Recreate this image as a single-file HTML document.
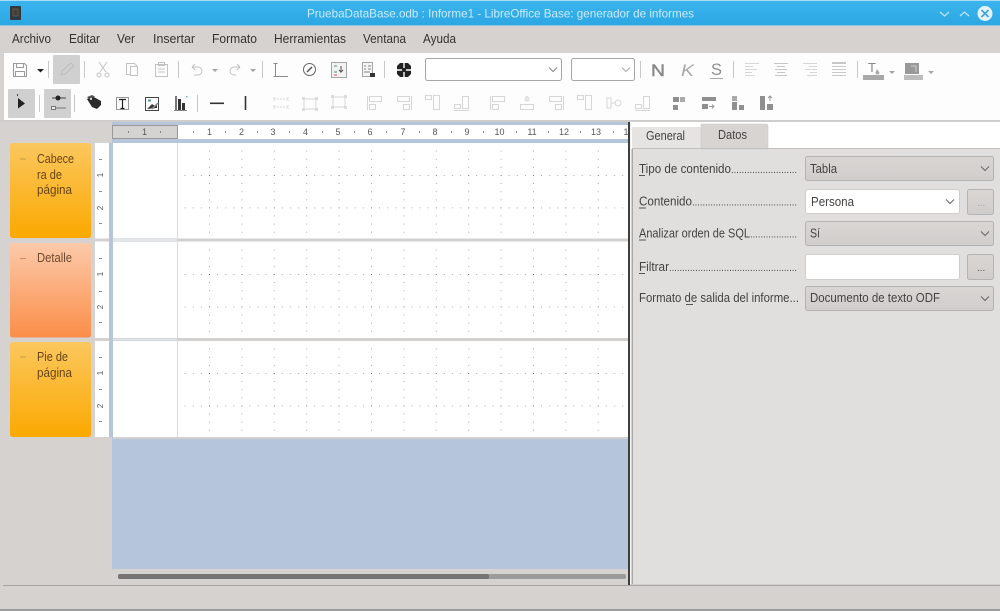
<!DOCTYPE html>
<html><head><meta charset="utf-8">
<style>
html,body{margin:0;padding:0;width:1000px;height:611px;overflow:hidden;background:#d6d2d0}
svg{display:block;filter:blur(.35px)}
text{font-family:"Liberation Sans",sans-serif;font-size:12.5px;fill:#3a3836}
.m{fill:#35332f}
.l{fill:#454341}
.r{font-size:9px;fill:#555;text-anchor:middle}
.b{fill:#66441a}
.ic{fill:none;stroke:#c2c2c2;stroke-width:1}
.li{fill:none;stroke:#d6d6d6;stroke-width:1}
.sep{stroke:#c8c8c8;stroke-width:1}
</style></head><body>
<svg width="1000" height="611" viewBox="0 0 1000 611" xmlns="http://www.w3.org/2000/svg">
<defs>
<linearGradient id="tb" x1="0" y1="0" x2="0" y2="1"><stop offset="0" stop-color="#3cb5ee"/><stop offset="1" stop-color="#2ba6e2"/></linearGradient>
<linearGradient id="y" x1="0" y1="0" x2="0" y2="1"><stop offset="0" stop-color="#fbc75e"/><stop offset="1" stop-color="#fba900"/></linearGradient>
<linearGradient id="o" x1="0" y1="0" x2="0" y2="1"><stop offset="0" stop-color="#fccaaa"/><stop offset="1" stop-color="#fb8e48"/></linearGradient>
<linearGradient id="c" x1="0" y1="0" x2="0" y2="1"><stop offset="0" stop-color="#d9d6d4"/><stop offset="1" stop-color="#d0cdcb"/></linearGradient>
<pattern id="g1" width="32.4" height="32.4" patternUnits="userSpaceOnUse" patternTransform="translate(176.6 142.6)">
<rect x="0" y="0" width="1" height="1" fill="#777"/>
<rect x="8" y="0" width="1" height="1" fill="#aaa"/><rect x="16.2" y="0" width="1" height="1" fill="#aaa"/><rect x="24.3" y="0" width="1" height="1" fill="#aaa"/>
<rect x="0" y="8" width="1" height="1" fill="#aaa"/><rect x="0" y="16.2" width="1" height="1" fill="#aaa"/><rect x="0" y="24.3" width="1" height="1" fill="#aaa"/>
</pattern>
<pattern id="g2" width="32.4" height="32.4" patternUnits="userSpaceOnUse" patternTransform="translate(176.6 241.6)">
<rect x="0" y="0" width="1" height="1" fill="#777"/>
<rect x="8" y="0" width="1" height="1" fill="#aaa"/><rect x="16.2" y="0" width="1" height="1" fill="#aaa"/><rect x="24.3" y="0" width="1" height="1" fill="#aaa"/>
<rect x="0" y="8" width="1" height="1" fill="#aaa"/><rect x="0" y="16.2" width="1" height="1" fill="#aaa"/><rect x="0" y="24.3" width="1" height="1" fill="#aaa"/>
</pattern>
<pattern id="g3" width="32.4" height="32.4" patternUnits="userSpaceOnUse" patternTransform="translate(176.6 340.6)">
<rect x="0" y="0" width="1" height="1" fill="#777"/>
<rect x="8" y="0" width="1" height="1" fill="#aaa"/><rect x="16.2" y="0" width="1" height="1" fill="#aaa"/><rect x="24.3" y="0" width="1" height="1" fill="#aaa"/>
<rect x="0" y="8" width="1" height="1" fill="#aaa"/><rect x="0" y="16.2" width="1" height="1" fill="#aaa"/><rect x="0" y="24.3" width="1" height="1" fill="#aaa"/>
</pattern>
<g id="a1" class="li"><rect x="-7.5" y="-7.5" width="6" height="4"/><rect x="0.5" y="-7.5" width="6" height="14"/></g>
<g id="a2" class="li"><rect x="-7.5" y="1.5" width="6" height="4"/><rect x="0.5" y="-6.5" width="6" height="12"/><path d="M-8 7.5H7"/></g>
<g id="a3" class="li"><path d="M-7.5-7V7"/><rect x="-5.5" y="-6.5" width="12" height="5"/><rect x="-5.5" y="1.5" width="6" height="5"/></g>
<g id="a4" class="li"><path d="M0-7V-2"/><circle cx="0" cy="-4" r="2"/><rect x="-6.5" y="1.5" width="13" height="5"/></g>
<g id="a5" class="li"><path d="M7.5-7V7"/><rect x="-6.5" y="-6.5" width="12" height="5"/><rect x="-.5" y="1.5" width="6" height="5"/></g>
<g id="a6" class="li"><rect x="-7" y="-5" width="4" height="10"/><path d="M-3 0H1"/><circle cx="4" cy="0" r="3"/></g>
<g id="d1" class="li"><path d="M-7-4H7M-7 4H7M-7-6V-2M7-6V-2M-7 2V6M7 2V6" stroke-dasharray="2 1"/></g>
<g id="d2" class="li"><rect x="-6" y="-5" width="12" height="10"/><rect x="-8" y="-7" width="3" height="3" fill="#dcdcdc" stroke="none"/><rect x="5" y="-7" width="3" height="3" fill="#dcdcdc" stroke="none"/><rect x="-8" y="4" width="3" height="3" fill="#dcdcdc" stroke="none"/><rect x="5" y="4" width="3" height="3" fill="#dcdcdc" stroke="none"/></g>
</defs>

<!-- base -->
<rect width="1000" height="611" fill="#d6d2d0"/>
<!-- title bar -->
<rect width="1000" height="26" fill="url(#tb)"/>
<rect width="1000" height="1" fill="#a9dcf5"/>
<rect x="0" y="25" width="1000" height="1" fill="#8fc6e0"/>
<rect x="10" y="6" width="11" height="14" rx="1" fill="#2f3a40"/>
<rect x="13" y="9" width="5" height="7" fill="#4a3a30" stroke="#7a6a5a" stroke-width=".6"/>
<text x="307" y="17.5" textLength="387" lengthAdjust="spacingAndGlyphs" style="fill:#c9ebfb;font-size:12px">PruebaDataBase.odb : Informe1 - LibreOffice Base: generador de informes</text>
<path d="M940 12l4.5 4 4.5-4" fill="none" stroke="#bfe6f9" stroke-width="1.2"/>
<path d="M960 16l4.5-4 4.5 4" fill="none" stroke="#bfe6f9" stroke-width="1.2"/>
<circle cx="985" cy="13.5" r="7.5" fill="#e4f4fc"/>
<path d="M981.5 10l7 7M988.5 10l-7 7" stroke="#3aa6dc" stroke-width="1.6"/>

<!-- menu -->
<g>
<text class="m" x="12" y="43" textLength="39" lengthAdjust="spacingAndGlyphs">Archivo</text>
<text class="m" x="69" y="43" textLength="31" lengthAdjust="spacingAndGlyphs">Editar</text>
<text class="m" x="117" y="43" textLength="18" lengthAdjust="spacingAndGlyphs">Ver</text>
<text class="m" x="153" y="43" textLength="42" lengthAdjust="spacingAndGlyphs">Insertar</text>
<text class="m" x="212" y="43" textLength="45" lengthAdjust="spacingAndGlyphs">Formato</text>
<text class="m" x="274" y="43" textLength="72" lengthAdjust="spacingAndGlyphs">Herramientas</text>
<text class="m" x="363" y="43" textLength="43" lengthAdjust="spacingAndGlyphs">Ventana</text>
<text class="m" x="423" y="43" textLength="33" lengthAdjust="spacingAndGlyphs">Ayuda</text>
</g>

<!-- toolbars -->
<rect x="4" y="53" width="996" height="67" fill="#fdfdfd"/>
<rect x="0" y="120" width="1000" height="2" fill="#cfcdcb"/>

<!-- row 1 -->
<g fill="none" stroke="#9a9a9a" stroke-width="1">
<path d="M13.5 63.5h11l2 2v11h-13z"/><rect x="16.5" y="63.5" width="7" height="4"/><rect x="15.5" y="71.5" width="9" height="5"/>
</g>
<path d="M37 69h7l-3.500 3.500z" fill="#222"/>
<line class="sep" x1="48.500" y1="61" x2="48.500" y2="78"/>
<rect x="53" y="55" width="27" height="29" rx="1" fill="#d0d0d0"/>
<path d="M61 75l1-4 9-8 3 3-9 8z" fill="none" stroke="#bbb"/>
<line class="sep" x1="84.500" y1="61" x2="84.500" y2="78"/>
<g class="ic"><path d="M99 62l7 10M107 62l-7 10"/><circle cx="99" cy="75" r="2"/><circle cx="107" cy="75" r="2"/>
<path d="M126.500 63.500h8l2 2v9h-10z"/><path d="M130.500 66.500h7v9h-7z" fill="#fff"/>
<rect x="155.500" y="64.500" width="12" height="12"/><rect x="158.500" y="62.500" width="6" height="3"/><path d="M158 69h7M158 72h7"/>
<path d="M192 67h6a4 4 0 0 1 0 8h-4M192 67l3-3M192 67l3 3"/>
<path d="M240 67h-6a4 4 0 0 0 0 8h2M240 67l-3-3M240 67l-3 3"/></g>
<line class="sep" x1="178.500" y1="61" x2="178.500" y2="78"/>
<path d="M212 69h6l-3 3zM250 69h6l-3 3z" fill="#a5a5a5"/>
<line class="sep" x1="262.500" y1="61" x2="262.500" y2="78"/>
<g fill="none" stroke="#8a8a8a"><path d="M275.500 63V76.500H288M273.500 63.500h4M273.500 76.500h4" /></g>
<circle cx="309.500" cy="69.500" r="6" fill="none" stroke="#666"/><path d="M307 72l5-5" stroke="#555" stroke-width="1.500"/>
<rect x="331.500" y="62.500" width="15" height="15" fill="#f2f2f2" stroke="#a5a5a5"/>
<path d="M334 66h3M334 72h3" stroke="#4a9a7a"/><path d="M334 75h3" stroke="#c55"/><path d="M341 66v6l2-2M341 72l-2-2" fill="none" stroke="#555"/>
<rect x="362.500" y="62.500" width="10" height="14" fill="#f4f4f4" stroke="#a5a5a5"/>
<path d="M364 66h2M368 66h3M364 69h2M368 69h3M364 72h6" stroke="#888"/><rect x="370" y="73" width="5" height="4" fill="#333"/>
<line class="sep" x1="384.500" y1="61" x2="384.500" y2="78"/>
<rect x="397" y="63" width="14" height="14" rx="2" fill="#222"/>
<path d="M404 62v16M396 70h16" stroke="#fff" stroke-width="1.400"/>
<path d="M397 63l3 0-3 3zM411 63l-3 0 3 3zM397 77l3 0-3-3zM411 77l-3 0 3-3z" fill="#fff"/>
<circle cx="404" cy="70" r="2" fill="#222"/>

<!-- combos -->
<rect x="425.500" y="58.500" width="136" height="22" rx="2" fill="#fff" stroke="#a8a6a4"/>
<path d="M549 67.500l4 4 4-4" fill="none" stroke="#888"/>
<rect x="571.500" y="58.500" width="63" height="22" rx="2" fill="#fff" stroke="#a8a6a4"/>
<path d="M622 67.500l4 4 4-4" fill="none" stroke="#aaa"/>
<line class="sep" x1="640.500" y1="61" x2="640.500" y2="78"/>
<text x="651" y="76" style="font-size:17px;fill:#8a8a8a;stroke:#8a8a8a;stroke-width:.5" textLength="14" lengthAdjust="spacingAndGlyphs">N</text>
<text x="681" y="76" style="font-size:17px;font-style:italic;fill:#a8a8a8" textLength="13" lengthAdjust="spacingAndGlyphs">K</text>
<text x="711" y="75" style="font-size:17px;fill:#8e8e8e" textLength="11" lengthAdjust="spacingAndGlyphs">S</text>
<rect x="710" y="78" width="13" height="1" fill="#aaa"/>
<line class="sep" x1="733.500" y1="61" x2="733.500" y2="78"/>
<g stroke="#d6d6d6" fill="none">
<path d="M745 63.500h14M745 66.500h8M745 69.500h12M745 72.500h7M745 75.500h10"/>
<path d="M774 63.500h14M777 66.500h8M775 69.500h12M777 72.500h8M775 75.500h12" stroke="#c6c6c6"/>
<path d="M803 63.500h14M809 66.500h8M805 69.500h12M810 72.500h7M807 75.500h10"/>
<path d="M832 63.500h14M832 66.500h14M832 69.500h14M832 72.500h14M832 75.500h14M832 62.500h14" stroke="#c8c8c8"/>
</g>
<line class="sep" x1="857.500" y1="61" x2="857.500" y2="78"/>
<text x="868" y="72" style="font-size:13px;fill:#888">T</text><path d="M877 68l2.500 3.500a2 2 0 1 1-4 0z" fill="#aaa" transform="translate(0 1)"/>
<rect x="863" y="75" width="21" height="5" fill="#a8a8a8"/>
<path d="M889 71h6l-3 3zM928 71h6l-3 3z" fill="#a5a5a5"/>
<rect x="905" y="63" width="14" height="11" fill="#999"/><rect x="904" y="75" width="19" height="5" fill="#bcbcbc"/>
<path d="M911 66h5v6" fill="none" stroke="#ccc"/>

<!-- row 2 -->
<rect x="8" y="89" width="27" height="29" rx="1" fill="#d0d0d0"/>
<path d="M18 98l7 5.500-7 5z" fill="#222"/><rect x="17" y="94" width="1" height="2" fill="#444"/>
<line class="sep" x1="39.500" y1="95" x2="39.500" y2="112"/>
<rect x="44" y="89" width="27" height="29" rx="1" fill="#d0d0d0"/>
<path d="M52 98h14" stroke="#444"/><circle cx="58" cy="98" r="2.500" fill="#222"/><path d="M56 108h10" stroke="#777"/><rect x="51.500" y="106.500" width="4" height="3" fill="#eee" stroke="#777"/>
<line class="sep" x1="74.500" y1="95" x2="74.500" y2="112"/>
<path d="M87 99l5-3 9 5 0 4-4 4-5-2z" fill="#2a2a2a"/><path d="M87 97l5-2 3 1.500-5 3z" fill="#555"/><circle cx="91" cy="99" r="1" fill="#fff"/>
<g stroke="#444" fill="none"><rect x="116.500" y="97.500" width="12" height="12" stroke="#999"/><path d="M119 99.500h7M122.500 99.500v9M120.500 108.500h4" stroke="#222" stroke-width="1.200"/></g>
<rect x="145.500" y="97.500" width="13" height="13" fill="#fff" stroke="#444"/><path d="M147 109l5-5 3 2 2-2v4z" fill="#3a3a3a"/><rect x="148" y="99.500" width="3" height="2" fill="#5a8fb5"/><path d="M152 109l6-6" stroke="#888" stroke-width="1.500"/>
<rect x="175" y="96" width="2" height="14" fill="#777"/><rect x="178" y="99" width="3" height="11" fill="#333"/><rect x="182" y="103" width="3" height="7" fill="#333"/><rect x="174" y="110" width="13" height="1" fill="#888"/><rect x="186" y="96" width="1.500" height="1.500" fill="#7ab"/>
<line class="sep" x1="197.500" y1="95" x2="197.500" y2="112"/>
<rect x="210" y="102.500" width="14" height="1.600" fill="#333"/>
<rect x="244.700" y="96" width="1.600" height="14" fill="#333"/>
<use href="#d1" x="281" y="103"/><use href="#d2" x="310" y="104"/><use href="#d2" x="339" y="102"/>
<use href="#a3" x="375" y="103"/><use href="#a5" x="404" y="103"/><use href="#a1" x="433" y="103"/><use href="#a2" x="462" y="103"/>
<use href="#a3" x="498" y="103"/><use href="#a4" x="527" y="103"/><use href="#a5" x="556" y="103"/><use href="#a1" x="585" y="103"/><use href="#a6" x="614" y="103"/><use href="#a2" x="643" y="103"/>
<g fill="#8f8f8f">
<rect x="673" y="97" width="6" height="5"/><rect x="680" y="97" width="5" height="5" fill="#aaa"/><rect x="673" y="105" width="5" height="5"/>
<rect x="702" y="97" width="14" height="4"/><rect x="702" y="104" width="6" height="5"/><path d="M709 106.500h5M712 104.500l2 2-2 2" fill="none" stroke="#999"/>
<rect x="732" y="96" width="5" height="5" fill="#aaa"/><rect x="732" y="102" width="5" height="8"/><rect x="739" y="105" width="5" height="5"/>
<rect x="760" y="96" width="5" height="14"/><rect x="767" y="104" width="6" height="6"/><path d="M770 101v-5M768 98l2-2 2 2" fill="none" stroke="#999"/>
</g>

<!-- editor -->
<rect x="112" y="122" width="516" height="318" fill="#b5c6dc"/>
<rect x="112.500" y="125.500" width="65" height="13" fill="#d5d3d1" stroke="#9a9896"/>
<rect x="178" y="125" width="450" height="14" fill="#fff"/>
<text class="r" x="144.500" y="135">1</text>
<g fill="#888"><rect x="128" y="131" width="1" height="2"/><rect x="160" y="131" width="1" height="2"/>
<rect x="193" y="131" width="1" height="2"/><rect x="225" y="131" width="1" height="2"/><rect x="257" y="131" width="1" height="2"/><rect x="289" y="131" width="1" height="2"/><rect x="322" y="131" width="1" height="2"/><rect x="354" y="131" width="1" height="2"/><rect x="386" y="131" width="1" height="2"/><rect x="419" y="131" width="1" height="2"/><rect x="451" y="131" width="1" height="2"/><rect x="483" y="131" width="1" height="2"/><rect x="516" y="131" width="1" height="2"/><rect x="548" y="131" width="1" height="2"/><rect x="580" y="131" width="1" height="2"/><rect x="613" y="131" width="1" height="2"/></g>
<text class="r" x="209.500" y="135">1</text><text class="r" x="241.500" y="135">2</text><text class="r" x="273" y="135">3</text><text class="r" x="305.500" y="135">4</text><text class="r" x="338" y="135">5</text><text class="r" x="370" y="135">6</text><text class="r" x="403" y="135">7</text><text class="r" x="435" y="135">8</text><text class="r" x="467" y="135">9</text><text class="r" x="499.500" y="135">10</text><text class="r" x="532" y="135">11</text><text class="r" x="564" y="135">12</text><text class="r" x="596" y="135">13</text><text class="r" x="626" y="135">1</text>

<!-- sections -->
<rect x="113" y="143" width="64" height="95.500" fill="#fff"/>
<rect x="177" y="143" width="451" height="95.500" fill="#fff"/>
<rect x="177" y="143.800" width="451" height="94.700" fill="url(#g1)"/>
<rect x="113" y="241.500" width="64" height="96.500" fill="#fff"/>
<rect x="177" y="241.500" width="451" height="96.500" fill="#fff"/>
<rect x="177" y="242.800" width="451" height="95.200" fill="url(#g2)"/>
<rect x="113" y="341" width="64" height="96" fill="#fff"/>
<rect x="177" y="341" width="451" height="96" fill="#fff"/>
<rect x="177" y="341.800" width="451" height="95.200" fill="url(#g3)"/>
<rect x="177" y="143" width="1" height="295" fill="#dcdad8"/>
<rect x="177" y="238.500" width="451" height="3" fill="#d3d1cf"/>
<rect x="177" y="338" width="451" height="3" fill="#d3d1cf"/>
<rect x="113" y="239" width="64" height="2" fill="#e8e6e4"/><rect x="113" y="338.500" width="64" height="2" fill="#e8e6e4"/>
<rect x="113" y="437" width="515" height="2" fill="#d3d1cf"/>

<!-- blue area -->
<rect x="112" y="439" width="516" height="130" fill="#b5c6dc"/>
<!-- scrollbar -->
<rect x="118" y="574" width="508" height="5" rx="2" fill="#9d9b99"/>
<rect x="118" y="574" width="371" height="5" rx="2" fill="#767574"/>

<!-- vertical rulers -->
<rect x="95" y="143" width="14" height="95.500" fill="#fff"/>
<rect x="95" y="241.500" width="14" height="96.500" fill="#fff"/>
<rect x="95" y="341" width="14" height="96" fill="#fff"/>
<rect x="109" y="143" width="4" height="294" fill="#b5c6dc"/>
<g fill="#888">
<rect x="99" y="159" width="3" height="1"/><rect x="99" y="191" width="3" height="1"/><rect x="99" y="223" width="3" height="1"/>
<rect x="99" y="258" width="3" height="1"/><rect x="99" y="291" width="3" height="1"/><rect x="99" y="322" width="3" height="1"/>
<rect x="99" y="357" width="3" height="1"/><rect x="99" y="389" width="3" height="1"/><rect x="99" y="421" width="3" height="1"/>
</g>
<text class="r" transform="translate(103 175) rotate(-90)" style="font-size:8px">1</text>
<text class="r" transform="translate(103 208) rotate(-90)" style="font-size:8px">2</text>
<text class="r" transform="translate(103 274) rotate(-90)" style="font-size:8px">1</text>
<text class="r" transform="translate(103 307) rotate(-90)" style="font-size:8px">2</text>
<text class="r" transform="translate(103 373) rotate(-90)" style="font-size:8px">1</text>
<text class="r" transform="translate(103 406) rotate(-90)" style="font-size:8px">2</text>

<!-- labels -->
<rect x="10" y="143" width="81" height="95" rx="2.500" fill="url(#y)"/>
<rect x="10" y="243" width="81" height="94.500" rx="2.500" fill="url(#o)"/>
<rect x="10" y="342" width="81" height="95" rx="2.500" fill="url(#y)"/>
<rect x="20" y="158.500" width="6" height="1" fill="#c79a4e"/>
<rect x="20" y="258" width="6" height="1" fill="#c0916e"/>
<rect x="20" y="356.500" width="6" height="1" fill="#c79a4e"/>
<text class="b" x="37" y="163" textLength="37" lengthAdjust="spacingAndGlyphs">Cabece</text>
<text class="b" x="37" y="179" textLength="25" lengthAdjust="spacingAndGlyphs">ra de</text>
<text class="b" x="37" y="194" textLength="35" lengthAdjust="spacingAndGlyphs">página</text>
<text class="b" x="37" y="262" textLength="35" lengthAdjust="spacingAndGlyphs" style="fill:#6e4a30">Detalle</text>
<text class="b" x="37" y="361" textLength="31" lengthAdjust="spacingAndGlyphs">Pie de</text>
<text class="b" x="37" y="377" textLength="35" lengthAdjust="spacingAndGlyphs">página</text>

<!-- splitter -->
<rect x="628" y="122" width="2" height="463" fill="#3e3e3e"/>
<rect x="630" y="122" width="1" height="463" fill="#f4f4f4"/>

<!-- right panel -->
<rect x="631" y="122" width="369" height="27" fill="#fff"/>
<rect x="632" y="149" width="368" height="436" fill="#e1dfdd"/>
<rect x="632" y="149" width="1" height="436" fill="#a9a7a5"/>
<rect x="632" y="127" width="69" height="22" fill="#e6e4e2"/>
<path d="M701 124h66l1 1v24h-67z" fill="#d7d4d2" stroke="#c8c6c4" stroke-width=".5"/>
<rect x="632" y="148" width="368" height="1" fill="#c3c1bf"/>
<text class="l" x="646" y="140" textLength="39" lengthAdjust="spacingAndGlyphs">General</text>
<text class="l" x="718" y="139" textLength="29" lengthAdjust="spacingAndGlyphs">Datos</text>

<text class="l" x="639" y="173" textLength="92" lengthAdjust="spacingAndGlyphs">Tipo de contenido</text>
<text class="l" x="731" y="173" textLength="66" lengthAdjust="spacingAndGlyphs" style="font-size:10px">.........................</text>
<rect x="639" y="175" width="6" height="1" fill="#555"/>
<text class="l" x="639" y="205.500" textLength="53" lengthAdjust="spacingAndGlyphs">Contenido</text>
<text class="l" x="692" y="205.500" textLength="105" lengthAdjust="spacingAndGlyphs" style="font-size:10px">........................................</text>
<rect x="639" y="207.500" width="7" height="1" fill="#555"/>
<text class="l" x="639" y="237.500" textLength="111" lengthAdjust="spacingAndGlyphs">Analizar orden de SQL</text>
<text class="l" x="750" y="237.500" textLength="47" lengthAdjust="spacingAndGlyphs" style="font-size:10px">..................</text>
<rect x="639" y="239.500" width="7" height="1" fill="#555"/>
<text class="l" x="639" y="271" textLength="30" lengthAdjust="spacingAndGlyphs">Filtrar</text>
<text class="l" x="669" y="271" textLength="128" lengthAdjust="spacingAndGlyphs" style="font-size:10px">.................................................</text>
<rect x="639" y="273" width="6" height="1" fill="#555"/>
<text class="l" x="639" y="302" textLength="160" lengthAdjust="spacingAndGlyphs">Formato de salida del informe...</text>
<rect x="686" y="304" width="7" height="1" fill="#555"/>

<g stroke="#b5b3b1">
<rect x="805.500" y="156.500" width="188" height="24" rx="2" fill="url(#c)"/>
<rect x="805.500" y="221.500" width="188" height="24" rx="2" fill="url(#c)"/>
<rect x="805.500" y="286.500" width="188" height="24" rx="2" fill="url(#c)"/>
<rect x="967.500" y="189.500" width="26" height="25" rx="2" fill="url(#c)"/>
<rect x="967.500" y="254.500" width="26" height="25" rx="2" fill="url(#c)"/>
</g>
<rect x="805.500" y="189.500" width="154" height="24" rx="2" fill="#fff" stroke="#cfcdcb"/>
<rect x="805.500" y="254.500" width="154" height="25" rx="2" fill="#fff" stroke="#cfcdcb"/>
<text class="l" x="810" y="173" textLength="27" lengthAdjust="spacingAndGlyphs">Tabla</text>
<text class="l" x="811" y="206" textLength="43" lengthAdjust="spacingAndGlyphs">Persona</text>
<text class="l" x="810" y="237.500" textLength="10" lengthAdjust="spacingAndGlyphs">Sí</text>
<text class="l" x="810" y="302" textLength="130" lengthAdjust="spacingAndGlyphs">Documento de texto ODF</text>
<g fill="none" stroke="#666">
<path d="M981 166.500l4 4 4-4"/><path d="M946 199.500l4 4 4-4"/><path d="M981 231.500l4 4 4-4"/><path d="M981 296.500l4 4 4-4"/>
</g>
<text x="977" y="206" style="font-size:10px;fill:#aaa">...</text>
<text x="977" y="271" style="font-size:10px;fill:#555">...</text>

<!-- status -->
<rect x="3" y="585" width="997" height="1" fill="#a8a6a4"/>
<rect x="630" y="584" width="370" height="1" fill="#d0cecc"/>
<rect x="0" y="609" width="1000" height="2" fill="#9a9c9e"/>
</svg>
</body></html>
